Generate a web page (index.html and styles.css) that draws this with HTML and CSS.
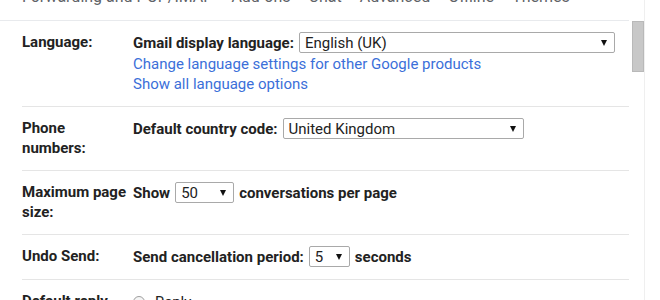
FILE: index.html
```html
<!DOCTYPE html>
<html lang="en">
<head>
    <meta charset="UTF-8">
    <meta name="viewport" content="width=device-width, initial-scale=1.0">
    <title>Settings</title>
    <link rel="stylesheet" href="styles.css">
</head>
<body>
    <div class="page">
        <div class="pane">
            <div class="tabs">
                <span>Forwarding and POP/IMAP</span>
                <span>Add-ons</span>
                <span>Chat</span>
                <span>Advanced</span>
                <span>Offline</span>
                <span>Themes</span>
            </div>

            <div class="row">
                <div class="label">Language:</div>
                <div class="content">
                    <div class="line">
                        <b>Gmail display language:</b>
                        <div class="select sel-lang"><span>English (UK)</span><i class="arrow"></i></div>
                    </div>
                    <a class="link" href="#">Change language settings for other Google products</a>
                    <a class="link" href="#">Show all language options</a>
                </div>
            </div>

            <div class="row">
                <div class="label">Phone numbers:</div>
                <div class="content">
                    <div class="line">
                        <b>Default country code:</b>
                        <div class="select sel-country"><span>United Kingdom</span><i class="arrow"></i></div>
                    </div>
                </div>
            </div>

            <div class="row">
                <div class="label">Maximum page size:</div>
                <div class="content">
                    <div class="line">
                        <b>Show</b>
                        <div class="select sel-size"><span>50</span><i class="arrow"></i></div>
                        <b>conversations per page</b>
                    </div>
                </div>
            </div>

            <div class="row">
                <div class="label">Undo Send:</div>
                <div class="content">
                    <div class="line">
                        <b>Send cancellation period:</b>
                        <div class="select sel-undo"><span>5</span><i class="arrow"></i></div>
                        <b>seconds</b>
                    </div>
                </div>
            </div>

            <div class="row">
                <div class="label">Default reply behaviour:</div>
                <div class="content">
                    <div class="line">
                        <i class="radio"></i>
                        <span>Reply</span>
                    </div>
                </div>
            </div>
        </div>
        <div class="scrollbar"><div class="thumb"></div></div>
    </div>
</body>
</html>
```

FILE: styles.css
```css
*{
    margin: 0;
    padding: 0;
    box-sizing: border-box;
}
body{
    font-family: Roboto, "Liberation Sans", Arial, sans-serif;
    font-size: 15px;
    color: #222;
    background: #fff;
    height: 300px;
    overflow: hidden;
}
.page{
    display: flex;
}
.pane{
    width: 629px;
}

/* tab strip, cut off at the top */
.tabs{
    display: flex;
    gap: 18px;
    margin-top: -13px;
    padding: 0 0 13px 22px;
    line-height: 20px;
    font-size: 16px;
    color: #5f6368;
    border-bottom: 1px solid #e8eaed;
}

.row{
    display: flex;
    margin-left: 22px;
    padding: 11px 0 12px;
    border-bottom: 1px solid #e5e5e5;
}
.label{
    width: 106px;
    margin-right: 5px;
    flex-shrink: 0;
    font-weight: bold;
    line-height: 20px;
}
.content{
    display: flex;
    flex-direction: column;
}
.line{
    display: flex;
    align-items: center;
    gap: 5px;
    height: 21px;
    white-space: nowrap;
}
.line b{
    font-weight: bold;
}
.link{
    display: block;
    line-height: 20px;
    color: #3b6fd9;
    text-decoration: none;
}
.line + .link{
    margin-top: 1px;
}

.select{
    display: flex;
    align-items: center;
    justify-content: space-between;
    height: 21px;
    padding: 0 7px 0 5px;
    border: 1px solid #a9a9a9;
    border-radius: 2px;
    background: #fff;
    color: #222;
}
.sel-lang{ width: 316px; }
.sel-country{ width: 241px; }
.sel-size{ width: 59px; }
.sel-undo{ width: 41px; }
.arrow{
    width: 0;
    height: 0;
    border-left: 3.5px solid transparent;
    border-right: 3.5px solid transparent;
    border-top: 6px solid #111;
}

.radio{
    width: 12px;
    height: 12px;
    margin-right: 5px;
    border: 1px solid #9e9e9e;
    border-radius: 50%;
    background: #f5f5f5;
}

.scrollbar{
    width: 14px;
    margin-left: 2px;
    height: 300px;
    border-right: 1px solid #efefef;
    padding: 21px 0 0 1px;
}
.thumb{
    width: 12px;
    height: 51px;
    background: #c8c8c8;
    border: 1px solid #b9b9b9;
}
```
